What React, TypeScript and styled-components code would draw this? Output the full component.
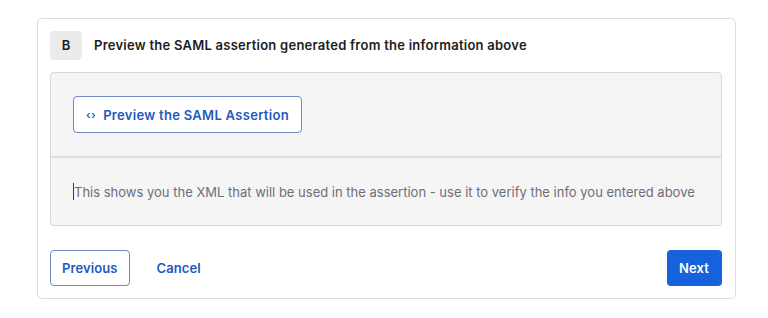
import styled, { createGlobalStyle } from 'styled-components'

const GlobalStyle = createGlobalStyle`
  html, body {
    margin: 0;
    padding: 0;
    background: #ffffff;
    font-family: Inter, "Noto Sans", "Liberation Sans", sans-serif;
  }
  * {
    box-sizing: border-box;
  }
`

const StyledPage = styled.div`
  width: 768px;
  height: 318px;
  padding: 18px 32px 0 37px;
`

const StyledCard = styled.div`
  width: 699px;
  height: 281px;
  border: 1px solid #dcdcdf;
  border-radius: 5px;
  padding: 11px 13px 12px 12px;
  display: flex;
  flex-direction: column;
`

const StyledStepHeader = styled.div`
  display: flex;
  align-items: center;
  gap: 12px;
  height: 30px;
`

const StyledBadge = styled.div`
  width: 32px;
  height: 29px;
  border-radius: 4px;
  background: #ebebed;
  color: #1d1d21;
  font-size: 13px;
  font-weight: 600;
  display: flex;
  align-items: center;
  justify-content: center;
`

const StyledTitle = styled.div`
  color: #1d1d21;
  font-size: 13px;
  font-weight: 600;
  letter-spacing: 0.25px;
`

const StyledPanel = styled.div`
  margin-top: 12px;
  border: 1px solid #d7d7dc;
  border-radius: 4px;
  background: #f5f5f6;
  display: flex;
  flex-direction: column;
`

const StyledPanelSection = styled.div<{ $divider?: boolean; $height: number }>`
  height: ${p => p.$height}px;
  padding: 0 22px;
  display: flex;
  align-items: center;
  border-top: ${p => (p.$divider ? '2px solid #dedee2' : 'none')};
`

const StyledOutlineButton = styled.button`
  height: 37px;
  padding: 0 12px;
  border: 1px solid #6f89c2;
  border-radius: 4px;
  background: #ffffff;
  color: #2459bd;
  font-family: inherit;
  font-size: 13px;
  font-weight: 600;
  letter-spacing: 0.3px;
  display: flex;
  align-items: center;
  gap: 7px;
  cursor: pointer;
`

const StyledFooterOutlineButton = styled(StyledOutlineButton)`
  height: 36px;
  padding: 0 11px;
  letter-spacing: 0.1px;
`

const StyledCodeIcon = styled.span`
  font-size: 11px;
  font-weight: 600;
  letter-spacing: 0.5px;
  color: #2459bd;
`

const StyledHint = styled.div`
  color: #6e6e78;
  font-size: 13px;
  display: flex;
  align-items: center;
`

const StyledCaret = styled.span`
  display: inline-block;
  width: 1px;
  height: 17px;
  background: #3a3a40;
`

const StyledFooter = styled.div`
  margin-top: auto;
  display: flex;
  align-items: center;
  gap: 27px;
`

const StyledTextButton = styled.button`
  border: none;
  background: transparent;
  color: #2459bd;
  font-family: inherit;
  font-size: 13px;
  font-weight: 600;
  letter-spacing: 0.1px;
  padding: 0;
  cursor: pointer;
`

const StyledPrimaryButton = styled.button`
  margin-left: auto;
  height: 36px;
  padding: 0 13px 0 12px;
  border: none;
  border-radius: 4px;
  background: #1662dd;
  color: #ffffff;
  font-family: inherit;
  font-size: 13px;
  font-weight: 600;
  letter-spacing: 0.1px;
  cursor: pointer;
`

const App = () => {
  return (
    <>
      <GlobalStyle />
      <StyledPage>
        <StyledCard>
          <StyledStepHeader>
            <StyledBadge>B</StyledBadge>
            <StyledTitle>Preview the SAML assertion generated from the information above</StyledTitle>
          </StyledStepHeader>

          <StyledPanel>
            <StyledPanelSection $height={83}>
              <StyledOutlineButton>
                <StyledCodeIcon>‹›</StyledCodeIcon>
                Preview the SAML Assertion
              </StyledOutlineButton>
            </StyledPanelSection>
            <StyledPanelSection $divider $height={69}>
              <StyledHint>
                <StyledCaret />
                This shows you the XML that will be used in the assertion - use it to verify the info
                you entered above
              </StyledHint>
            </StyledPanelSection>
          </StyledPanel>

          <StyledFooter>
            <StyledFooterOutlineButton>Previous</StyledFooterOutlineButton>
            <StyledTextButton>Cancel</StyledTextButton>
            <StyledPrimaryButton>Next</StyledPrimaryButton>
          </StyledFooter>
        </StyledCard>
      </StyledPage>
    </>
  )
}

export default App
